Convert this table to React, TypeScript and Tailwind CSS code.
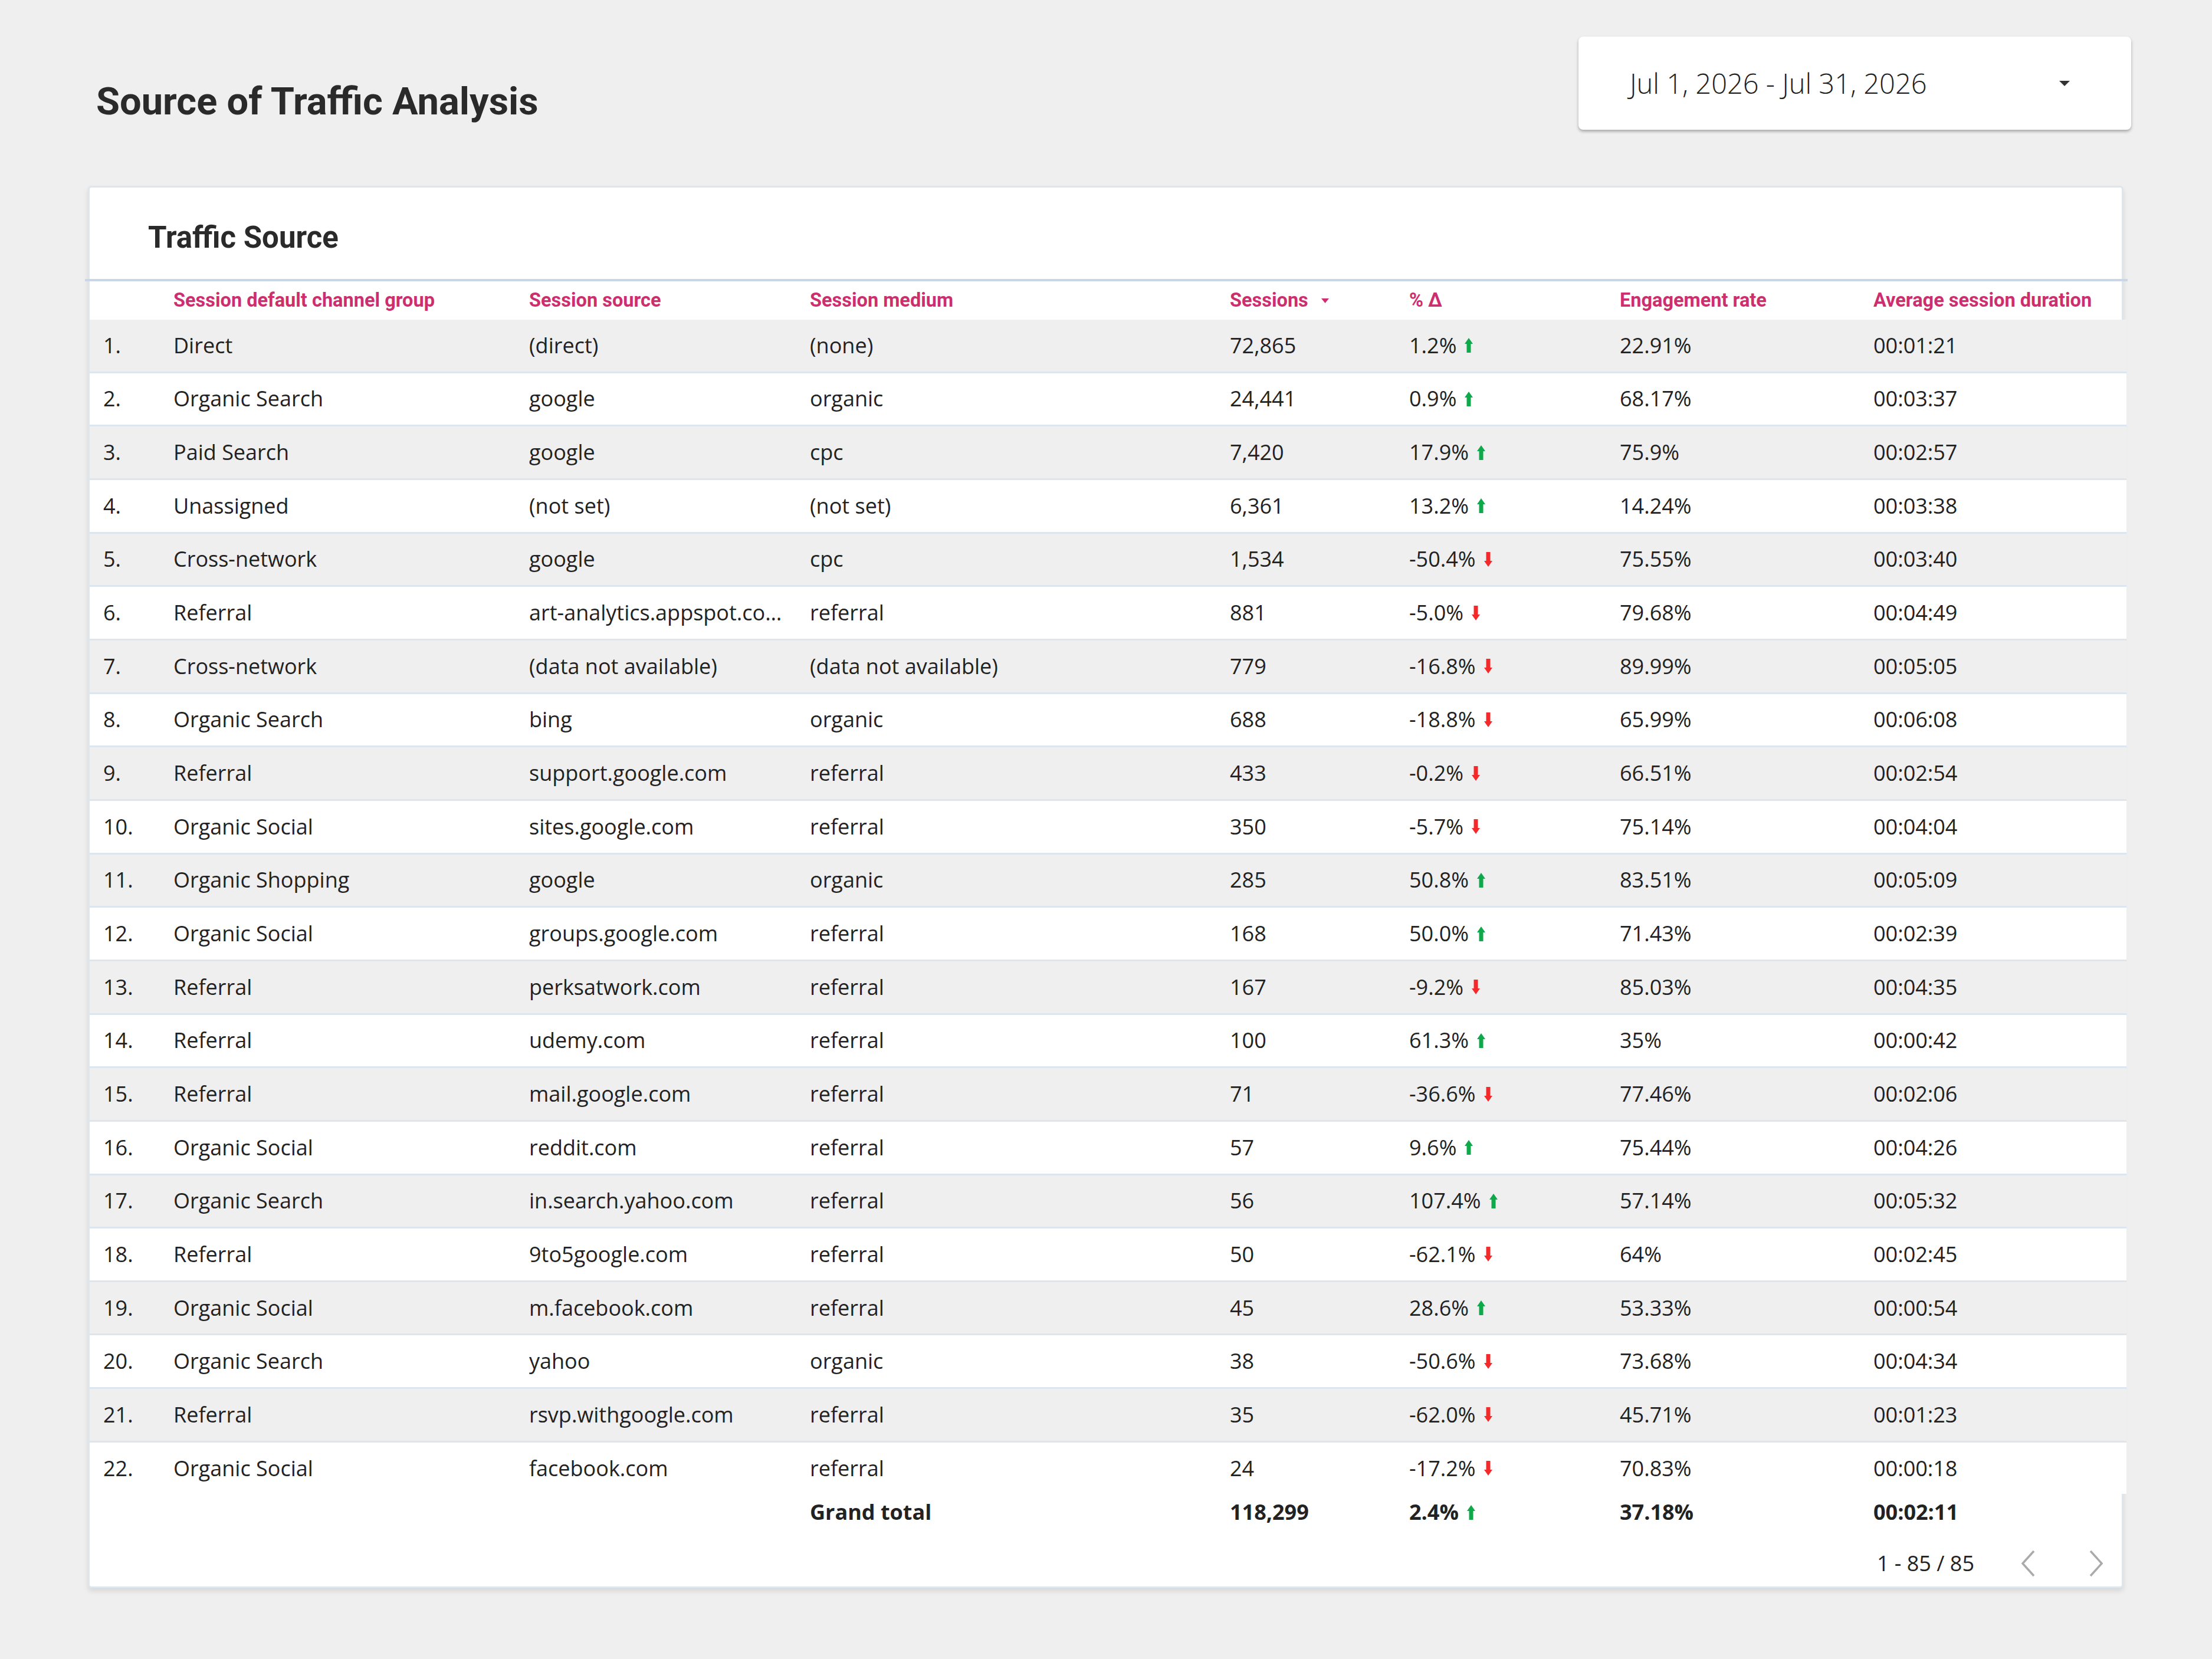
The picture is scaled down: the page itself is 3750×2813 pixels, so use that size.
import React from "react";

type Row = {
  channel: string;
  source: string;
  medium: string;
  sessions: string;
  delta: string;
  up: boolean;
  engagement: string;
  duration: string;
};

const rows: Row[] = [
  { channel: "Direct", source: "(direct)", medium: "(none)", sessions: "72,865", delta: "1.2%", up: true, engagement: "22.91%", duration: "00:01:21" },
  { channel: "Organic Search", source: "google", medium: "organic", sessions: "24,441", delta: "0.9%", up: true, engagement: "68.17%", duration: "00:03:37" },
  { channel: "Paid Search", source: "google", medium: "cpc", sessions: "7,420", delta: "17.9%", up: true, engagement: "75.9%", duration: "00:02:57" },
  { channel: "Unassigned", source: "(not set)", medium: "(not set)", sessions: "6,361", delta: "13.2%", up: true, engagement: "14.24%", duration: "00:03:38" },
  { channel: "Cross-network", source: "google", medium: "cpc", sessions: "1,534", delta: "-50.4%", up: false, engagement: "75.55%", duration: "00:03:40" },
  { channel: "Referral", source: "art-analytics.appspot.com", medium: "referral", sessions: "881", delta: "-5.0%", up: false, engagement: "79.68%", duration: "00:04:49" },
  { channel: "Cross-network", source: "(data not available)", medium: "(data not available)", sessions: "779", delta: "-16.8%", up: false, engagement: "89.99%", duration: "00:05:05" },
  { channel: "Organic Search", source: "bing", medium: "organic", sessions: "688", delta: "-18.8%", up: false, engagement: "65.99%", duration: "00:06:08" },
  { channel: "Referral", source: "support.google.com", medium: "referral", sessions: "433", delta: "-0.2%", up: false, engagement: "66.51%", duration: "00:02:54" },
  { channel: "Organic Social", source: "sites.google.com", medium: "referral", sessions: "350", delta: "-5.7%", up: false, engagement: "75.14%", duration: "00:04:04" },
  { channel: "Organic Shopping", source: "google", medium: "organic", sessions: "285", delta: "50.8%", up: true, engagement: "83.51%", duration: "00:05:09" },
  { channel: "Organic Social", source: "groups.google.com", medium: "referral", sessions: "168", delta: "50.0%", up: true, engagement: "71.43%", duration: "00:02:39" },
  { channel: "Referral", source: "perksatwork.com", medium: "referral", sessions: "167", delta: "-9.2%", up: false, engagement: "85.03%", duration: "00:04:35" },
  { channel: "Referral", source: "udemy.com", medium: "referral", sessions: "100", delta: "61.3%", up: true, engagement: "35%", duration: "00:00:42" },
  { channel: "Referral", source: "mail.google.com", medium: "referral", sessions: "71", delta: "-36.6%", up: false, engagement: "77.46%", duration: "00:02:06" },
  { channel: "Organic Social", source: "reddit.com", medium: "referral", sessions: "57", delta: "9.6%", up: true, engagement: "75.44%", duration: "00:04:26" },
  { channel: "Organic Search", source: "in.search.yahoo.com", medium: "referral", sessions: "56", delta: "107.4%", up: true, engagement: "57.14%", duration: "00:05:32" },
  { channel: "Referral", source: "9to5google.com", medium: "referral", sessions: "50", delta: "-62.1%", up: false, engagement: "64%", duration: "00:02:45" },
  { channel: "Organic Social", source: "m.facebook.com", medium: "referral", sessions: "45", delta: "28.6%", up: true, engagement: "53.33%", duration: "00:00:54" },
  { channel: "Organic Search", source: "yahoo", medium: "organic", sessions: "38", delta: "-50.6%", up: false, engagement: "73.68%", duration: "00:04:34" },
  { channel: "Referral", source: "rsvp.withgoogle.com", medium: "referral", sessions: "35", delta: "-62.0%", up: false, engagement: "45.71%", duration: "00:01:23" },
  { channel: "Organic Social", source: "facebook.com", medium: "referral", sessions: "24", delta: "-17.2%", up: false, engagement: "70.83%", duration: "00:00:18" },
];

// same column template for header, body and total rows
const cols = "grid grid-cols-[142px_603px_476px_712px_304px_357px_430px_1fr] items-center";

function Arrow({ up }: { up: boolean }) {
  return (
    <svg width="14" height="25" viewBox="0 0 14 25" className="shrink-0">
      {up ? (
        <polygon points="7,0 14,10 10.5,10 10.5,25 3.5,25 3.5,10 0,10" fill="#0fa94b" />
      ) : (
        <polygon points="7,25 14,15 10.5,15 10.5,0 3.5,0 3.5,15 0,15" fill="#f42a2a" />
      )}
    </svg>
  );
}

function Delta({ value, up }: { value: string; up: boolean }) {
  return (
    <div className="flex items-center gap-[14px]">
      <span>{value}</span>
      <Arrow up={up} />
    </div>
  );
}

export default function App() {
  return (
    <div className="min-h-[2813px] w-[3750px] bg-[#efefef] pb-[100px] font-['Open_Sans',sans-serif] text-[#222]">
      {/* top bar */}
      <div className="flex items-start justify-between pl-[163px] pr-[137px] pt-[62px]">
        <h1 className="mt-[78px] font-['Roboto',sans-serif] text-[65px] leading-none font-bold text-[#2a2a2a]">
          Source of Traffic Analysis
        </h1>
        <div className="flex h-[158px] w-[937px] items-center justify-between rounded-[8px] bg-white pl-[87px] pr-[104px] shadow-[0_3px_5px_rgba(0,0,0,0.3)]">
          <span className="text-[47px] font-light leading-none text-[#222]">Jul 1, 2026 - Jul 31, 2026</span>
          <svg width="18" height="9" viewBox="0 0 18 9">
            <polygon points="0,0 18,0 9,9" fill="#333" />
          </svg>
        </div>
      </div>

      {/* card */}
      <div className="ml-[149px] mt-[95px] w-[3451px] rounded-[6px] border-[3px] border-[#dde5ee] bg-white shadow-[0_5px_8px_rgba(0,0,0,0.1)]">
        <div className="flex h-[155px] items-center pl-[99px] pt-[14px]">
          <h2 className="font-['Roboto',sans-serif] text-[51px] leading-none font-bold text-[#2a2a2a]">Traffic Source</h2>
        </div>
        <div className="-ml-[8px] -mr-[10px] h-[4px] bg-[#c9d6e3]" />

        <div className="-mr-[8px]">
          <div className={`${cols} h-[65px] font-['Roboto',sans-serif] text-[32.5px] font-bold text-[#cd2e6e]`}>
            <div />
            <div>Session default channel group</div>
            <div>Session source</div>
            <div>Session medium</div>
            <div className="flex items-center">
              <span>Sessions</span>
              <svg width="13" height="8" viewBox="0 0 13 8" className="ml-[22px]">
                <polygon points="0,0 13,0 6.5,8" fill="#cd2e6e" />
              </svg>
            </div>
            <div>% Δ</div>
            <div>Engagement rate</div>
            <div>Average session duration</div>
          </div>

          {rows.map((r, i) => (
            <div
              key={i}
              className={`${cols} text-[36px] ${i % 2 === 0 ? "bg-[#efefef]" : "bg-white"} ${
                i < rows.length - 1 ? "h-[90.67px] border-b-[3px] border-[#dde5ee]" : "h-[87.67px]"
              }`}
            >
              <div className="pl-[23px]">{i + 1}.</div>
              <div>{r.channel}</div>
              <div className="truncate pr-[45px]">{r.source}</div>
              <div>{r.medium}</div>
              <div>{r.sessions}</div>
              <Delta value={r.delta} up={r.up} />
              <div>{r.engagement}</div>
              <div>{r.duration}</div>
            </div>
          ))}

          <div className={`${cols} h-[62px] text-[36px] font-bold`}>
            <div />
            <div />
            <div />
            <div>Grand total</div>
            <div>118,299</div>
            <Delta value="2.4%" up />
            <div>37.18%</div>
            <div>00:02:11</div>
          </div>
        </div>

        {/* pagination */}
        <div className="flex h-[95px] items-center justify-end pr-[32px] pt-[16px]">
          <span className="mr-[80px] text-[36px] leading-none">1 - 85 / 85</span>
          <svg width="23" height="46" viewBox="0 0 23 46">
            <polyline points="21,2 2,23 21,44" fill="none" stroke="#aaa" strokeWidth="3.5" />
          </svg>
          <svg width="23" height="46" viewBox="0 0 23 46" className="ml-[92px]">
            <polyline points="2,2 21,23 2,44" fill="none" stroke="#aaa" strokeWidth="3.5" />
          </svg>
        </div>
      </div>
    </div>
  );
}
